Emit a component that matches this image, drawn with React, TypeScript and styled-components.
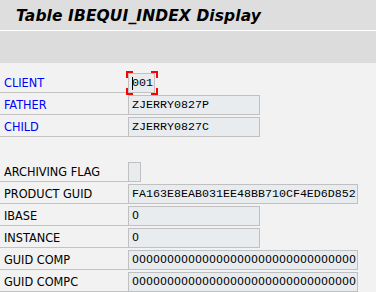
import React from "react";
import styled, { createGlobalStyle } from "styled-components";

const Global = createGlobalStyle`
  html, body { margin: 0; padding: 0; background: #f2f2f2; }
  body { width: 376px; height: 292px; overflow: hidden; }
`;

const Page = styled.div`
  width: 376px;
  height: 292px;
  background: #f2f2f2;
  display: flex;
  flex-direction: column;
`;

const TitleBar = styled.div`
  height: 31px;
  box-sizing: border-box;
  background: #dedede;
  border-bottom: 1px solid #ffffff;
  padding-left: 16px;
  padding-top: 1px;
  display: flex;
  align-items: center;
  font-family: "DejaVu Sans", Verdana, sans-serif;
  font-weight: bold;
  font-style: italic;
  font-size: 15.5px;
  letter-spacing: 0.1px;
  color: #000;
`;

const Toolbar = styled.div`
  height: 32px;
  background: #dcdcdc;
`;

const Form = styled.div`
  padding-top: 8px;
  display: flex;
  flex-direction: column;
`;

const Row = styled.div`
  display: flex;
  height: 22px;
  align-items: flex-start;
`;

const Spacer = styled.div`
  height: 23px;
`;

const Label = styled.div<{ $blue?: boolean }>`
  width: 128px;
  height: 22px;
  box-sizing: border-box;
  border-bottom: 1px solid #c3c3c3;
  padding-left: 4px;
  padding-top: 2px;
  line-height: 20px;
  font-family: "DejaVu Sans Condensed", "DejaVu Sans", Tahoma, sans-serif;
  font-size: 12.6px;
  color: ${(p) => (p.$blue ? "#0000ff" : "#000000")};
  white-space: nowrap;
`;

const Field = styled.div<{ $w: number; $sans?: boolean }>`
  position: relative;
  margin-top: 2px;
  width: ${(p) => p.$w}px;
  height: 20px;
  box-sizing: border-box;
  border: 1px solid #c0c0c0;
  background: #e8ecef;
  padding-left: 3px;
  line-height: 18px;
  font-family: ${(p) =>
    p.$sans ? `"DejaVu Sans", Tahoma, sans-serif` : `"Liberation Mono", "Courier New", monospace`};
  font-size: ${(p) => (p.$sans ? "11px" : "11.67px")};
  color: #000;
  white-space: nowrap;
  overflow: hidden;
`;

const FocusWrap = styled.div`
  position: relative;
`;

const Corner = styled.span<{ $pos: "tl" | "tr" | "bl" | "br" }>`
  position: absolute;
  width: 5px;
  height: 5px;
  border-color: #ff0000;
  border-style: solid;
  border-width: 0;
  ${(p) => (p.$pos[0] === "t" ? "top: 0px; border-top-width: 2px;" : "bottom: -2px; border-bottom-width: 2px;")}
  ${(p) => (p.$pos[1] === "l" ? "left: -2px; border-left-width: 2px;" : "right: -3px; border-right-width: 2px;")}
`;

const Caret = styled.span`
  position: absolute;
  left: 3px;
  top: 3px;
  width: 1px;
  height: 13px;
  background: #000;
`;

type R = { label: string; value: string; w: number; sans?: boolean; blue?: boolean };

const top: R[] = [
  { label: "FATHER", value: "ZJERRY0827P", w: 132, blue: true },
  { label: "CHILD", value: "ZJERRY0827C", w: 132, blue: true },
];

const bottom: R[] = [
  { label: "PRODUCT GUID", value: "FA163E8EAB031EE48BB710CF4ED6D852", w: 230 },
  { label: "IBASE", value: "0", w: 132, sans: true },
  { label: "INSTANCE", value: "0", w: 132, sans: true },
  { label: "GUID COMP", value: "00000000000000000000000000000000", w: 230, sans: true },
  { label: "GUID COMPC", value: "00000000000000000000000000000000", w: 230, sans: true },
];

export default function App() {
  return (
    <Page>
      <Global />
      <TitleBar>Table IBEQUI_INDEX Display</TitleBar>
      <Toolbar />
      <Form>
        <Row>
          <Label $blue>CLIENT</Label>
          <FocusWrap>
            <Field $w={27}>
              001
              <Caret />
            </Field>
            <Corner $pos="tl" />
            <Corner $pos="tr" />
            <Corner $pos="bl" />
            <Corner $pos="br" />
          </FocusWrap>
        </Row>
        {top.map((r) => (
          <Row key={r.label}>
            <Label $blue={r.blue}>{r.label}</Label>
            <Field $w={r.w} $sans={r.sans}>{r.value}</Field>
          </Row>
        ))}
        <Spacer />
        <Row>
          <Label>ARCHIVING FLAG</Label>
          <Field $w={13} />
        </Row>
        {bottom.map((r) => (
          <Row key={r.label}>
            <Label>{r.label}</Label>
            <Field $w={r.w} $sans={r.sans}>{r.value}</Field>
          </Row>
        ))}
      </Form>
    </Page>
  );
}
